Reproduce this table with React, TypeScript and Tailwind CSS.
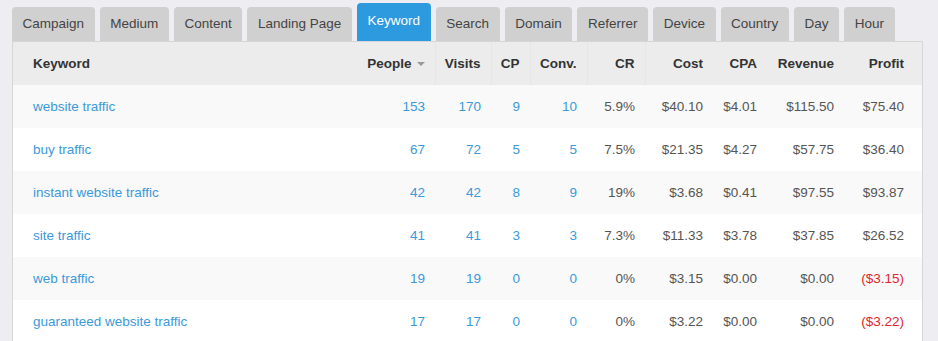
const tabs = ['Campaign', 'Medium', 'Content', 'Landing Page', 'Keyword', 'Search', 'Domain', 'Referrer', 'Device', 'Country', 'Day', 'Hour'];

type Row = {
    keyword: string;
    people: number;
    visits: number;
    cp: number;
    conv: number;
    cr: string;
    cost: string;
    cpa: string;
    revenue: string;
    profit: string;
};

const rows: Row[] = [
    { keyword: 'website traffic', people: 153, visits: 170, cp: 9, conv: 10, cr: '5.9%', cost: '$40.10', cpa: '$4.01', revenue: '$115.50', profit: '$75.40' },
    { keyword: 'buy traffic', people: 67, visits: 72, cp: 5, conv: 5, cr: '7.5%', cost: '$21.35', cpa: '$4.27', revenue: '$57.75', profit: '$36.40' },
    { keyword: 'instant website traffic', people: 42, visits: 42, cp: 8, conv: 9, cr: '19%', cost: '$3.68', cpa: '$0.41', revenue: '$97.55', profit: '$93.87' },
    { keyword: 'site traffic', people: 41, visits: 41, cp: 3, conv: 3, cr: '7.3%', cost: '$11.33', cpa: '$3.78', revenue: '$37.85', profit: '$26.52' },
    { keyword: 'web traffic', people: 19, visits: 19, cp: 0, conv: 0, cr: '0%', cost: '$3.15', cpa: '$0.00', revenue: '$0.00', profit: '($3.15)' },
    { keyword: 'guaranteed website traffic', people: 17, visits: 17, cp: 0, conv: 0, cr: '0%', cost: '$3.22', cpa: '$0.00', revenue: '$0.00', profit: '($3.22)' },
];

export default function App() {
    return (
        <div className="min-h-[341px] w-[938px] overflow-hidden bg-[#eeeef2] pl-3 font-['Liberation_Sans',Arial,sans-serif] text-[13.5px]">
            <div className="flex h-[41px] items-end gap-[5px]">
                {tabs.map((t) =>
                    t === 'Keyword' ? (
                        <div key={t} className="flex h-[38px] items-center rounded-t-[4px] bg-[#2d9ae0] px-[10.6px] pb-[1px] text-white">
                            {t}
                        </div>
                    ) : (
                        <div key={t} className="flex h-[34px] items-center rounded-t-[4px] bg-[#d0d0d0] px-[10.6px] pt-[1px] text-[#444]">
                            {t}
                        </div>
                    )
                )}
            </div>
            <div className="w-[911px] border-t border-l border-r border-[#d6d6d6]">
                <table className="w-full table-fixed border-collapse">
                    <colgroup>
                        <col className="w-[342px]" />
                        <col className="w-[80px]" />
                        <col className="w-[56px]" />
                        <col className="w-[39px]" />
                        <col className="w-[57px]" />
                        <col className="w-[58px]" />
                        <col className="w-[68px]" />
                        <col className="w-[54px]" />
                        <col className="w-[77px]" />
                        <col className="w-[78px]" />
                    </colgroup>
                    <thead>
                        <tr className="h-[43px] bg-[#ececec] font-bold text-[#333]">
                            <th className="pl-[20px] pt-[1px] text-left">Keyword</th>
                            <th className="border-r border-[#e6e6e6] pr-[10px] pt-[1px] text-right">
                                People
                                <span className="ml-[5px] inline-block h-0 w-0 border-x-[4px] border-t-[4px] border-x-transparent border-t-[#999] align-middle" />
                            </th>
                            <th className="border-r border-[#e6e6e6] pr-[10px] pt-[1px] text-right">Visits</th>
                            <th className="border-r border-[#e6e6e6] pr-[10px] pt-[1px] text-right">CP</th>
                            <th className="border-r border-[#e6e6e6] pr-[10px] pt-[1px] text-right">Conv.</th>
                            <th className="border-r border-[#e6e6e6] pr-[10px] pt-[1px] text-right">CR</th>
                            <th className="pr-[10px] pt-[1px] text-right">Cost</th>
                            <th className="pr-[10px] pt-[1px] text-right">CPA</th>
                            <th className="pr-[10px] pt-[1px] text-right">Revenue</th>
                            <th className="pr-[18px] pt-[1px] text-right">Profit</th>
                        </tr>
                    </thead>
                    <tbody>
                        {rows.map((r, i) => (
                            <tr key={r.keyword} className={`h-[43px] ${i % 2 === 0 ? 'bg-[#f9f9f9]' : 'bg-white'}`}>
                                <td className="pl-[20px] pt-[1px] text-[#3b9ad9]">{r.keyword}</td>
                                <td className="pr-[10px] pt-[1px] text-right text-[#3b9ad9]">{r.people}</td>
                                <td className="pr-[10px] pt-[1px] text-right text-[#3b9ad9]">{r.visits}</td>
                                <td className="pr-[10px] pt-[1px] text-right text-[#3b9ad9]">{r.cp}</td>
                                <td className="pr-[10px] pt-[1px] text-right text-[#3b9ad9]">{r.conv}</td>
                                <td className="pr-[10px] pt-[1px] text-right text-[#555]">{r.cr}</td>
                                <td className="pr-[10px] pt-[1px] text-right text-[#555]">{r.cost}</td>
                                <td className="pr-[10px] pt-[1px] text-right text-[#555]">{r.cpa}</td>
                                <td className="pr-[10px] pt-[1px] text-right text-[#555]">{r.revenue}</td>
                                <td className={`pr-[18px] pt-[1px] text-right ${r.profit.startsWith('(') ? 'text-[#e0262b]' : 'text-[#555]'}`}>{r.profit}</td>
                            </tr>
                        ))}
                    </tbody>
                </table>
            </div>
        </div>
    );
}
